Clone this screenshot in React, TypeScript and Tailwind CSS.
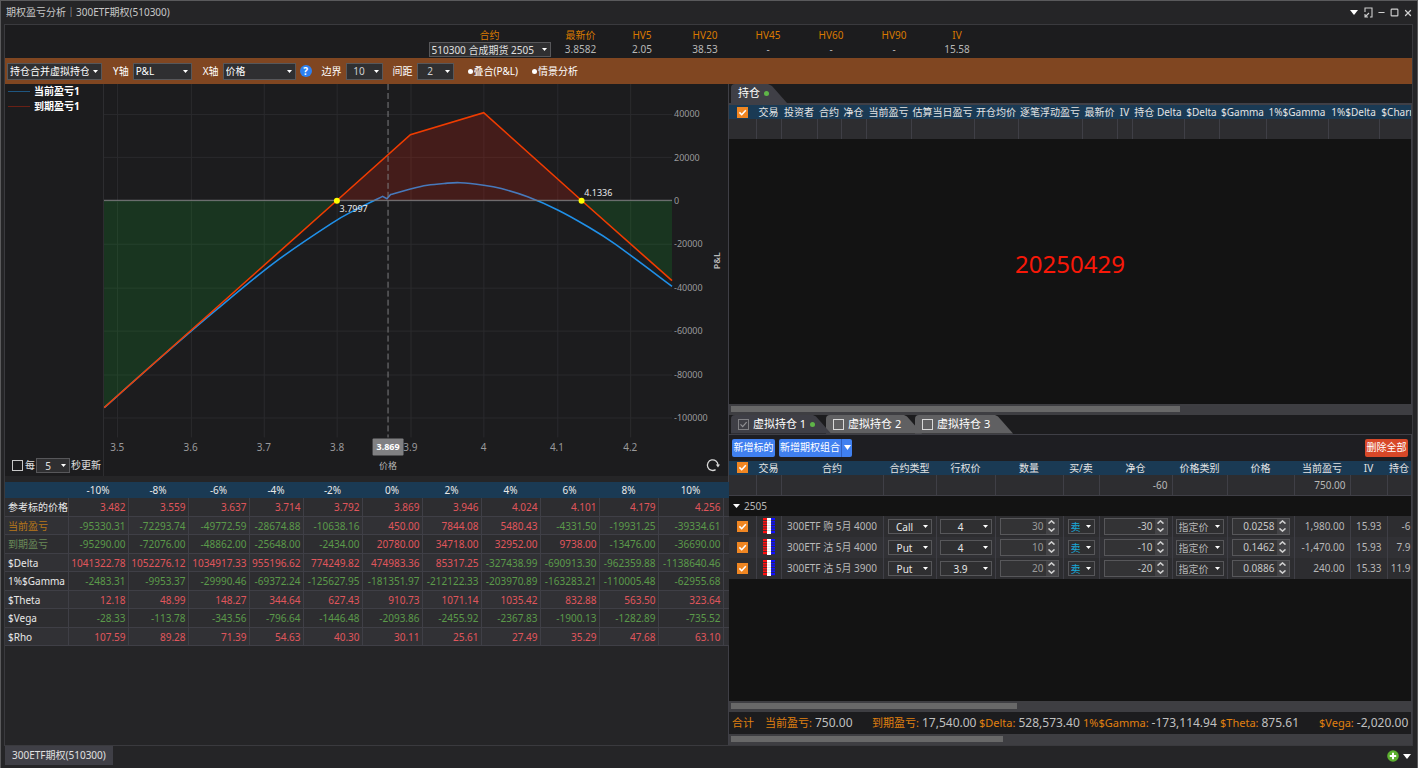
import type { ReactNode } from "react";
import { Minus, Square, X } from "lucide-react";

const stats = [
  { label: "最新价", value: "3.8582" },
  { label: "HV5", value: "2.05" },
  { label: "HV20", value: "38.53" },
  { label: "HV45", value: "-" },
  { label: "HV60", value: "-" },
  { label: "HV90", value: "-" },
  { label: "IV", value: "15.58" },
];

const scenarioHeads = ["-10%", "-8%", "-6%", "-4%", "-2%", "0%", "2%", "4%", "6%", "8%", "10%"];
const scenarioCols = [63, 60, 60, 61, 54, 59, 60, 59, 59, 59, 59, 65, 6];

const scenarioRows = [
  { name: "参考标的价格", color: "text-[#e8e8e8]", cells: ["3.482", "3.559", "3.637", "3.714", "3.792", "3.869", "3.946", "4.024", "4.101", "4.179", "4.256"] },
  { name: "当前盈亏", color: "text-[#b87818]", cells: ["-95330.31", "-72293.74", "-49772.59", "-28674.88", "-10638.16", "450.00", "7844.08", "5480.43", "-4331.50", "-19931.25", "-39334.61"] },
  { name: "到期盈亏", color: "text-[#6a8a58]", cells: ["-95290.00", "-72076.00", "-48862.00", "-25648.00", "-2434.00", "20780.00", "34718.00", "32952.00", "9738.00", "-13476.00", "-36690.00"] },
  { name: "$Delta", color: "text-[#e8e8e8]", cells: ["1041322.78", "1052276.12", "1034917.33", "955196.62", "774249.82", "474983.36", "85317.25", "-327438.99", "-690913.30", "-962359.88", "-1138640.46"] },
  { name: "1%$Gamma", color: "text-[#e8e8e8]", cells: ["-2483.31", "-9953.37", "-29990.46", "-69372.24", "-125627.95", "-181351.97", "-212122.33", "-203970.89", "-163283.21", "-110005.48", "-62955.68"] },
  { name: "$Theta", color: "text-[#e8e8e8]", cells: ["12.18", "48.99", "148.27", "344.64", "627.43", "910.73", "1071.14", "1035.42", "832.88", "563.50", "323.64"] },
  { name: "$Vega", color: "text-[#e8e8e8]", cells: ["-28.33", "-113.78", "-343.56", "-796.64", "-1446.48", "-2093.86", "-2455.92", "-2367.83", "-1900.13", "-1282.89", "-735.52"] },
  { name: "$Rho", color: "text-[#e8e8e8]", cells: ["107.59", "89.28", "71.39", "54.63", "40.30", "30.11", "25.61", "27.49", "35.29", "47.68", "63.10"] },
];

const positionCols = [
  { title: "交易", width: 25 },
  { title: "投资者", width: 36 },
  { title: "合约", width: 24 },
  { title: "净仓", width: 25 },
  { title: "当前盈亏", width: 45 },
  { title: "估算当日盈亏", width: 63 },
  { title: "开仓均价", width: 44 },
  { title: "逐笔浮动盈亏", width: 64 },
  { title: "最新价", width: 35 },
  { title: "IV", width: 15 },
  { title: "持仓 Delta", width: 52 },
  { title: "$Delta", width: 35 },
  { title: "$Gamma", width: 47 },
  { title: "1%$Gamma", width: 62 },
  { title: "1%$Delta", width: 51 },
  { title: "$Charm", width: 42 },
];

const virtualCols = [
  { title: "交易", width: 25, sum: "" },
  { title: "合约", width: 102, sum: "" },
  { title: "合约类型", width: 53, sum: "" },
  { title: "行权价", width: 59, sum: "" },
  { title: "数量", width: 68, sum: "" },
  { title: "买/卖", width: 36, sum: "" },
  { title: "净仓", width: 73, sum: "-60" },
  { title: "价格类别", width: 55, sum: "" },
  { title: "价格", width: 67, sum: "" },
  { title: "当前盈亏", width: 56, sum: "750.00" },
  { title: "IV", width: 37, sum: "" },
  { title: "持仓", width: 24, sum: "" },
];

const legs = [
  { name: "300ETF 购 5月 4000", type: "Call", strike: "4", qty: "30", net: "-30", price: "0.0258", pnl: "1,980.00", iv: "15.93", delta: "-6" },
  { name: "300ETF 沽 5月 4000", type: "Put", strike: "4", qty: "10", net: "-10", price: "0.1462", pnl: "-1,470.00", iv: "15.93", delta: "7.9" },
  { name: "300ETF 沽 5月 3900", type: "Put", strike: "3.9", qty: "20", net: "-20", price: "0.0886", pnl: "240.00", iv: "15.33", delta: "11.9" },
];

const totals = [
  { label: "当前盈亏:", value: "750.00", width: "w-[107px]" },
  { label: "到期盈亏:", value: "17,540.00", width: "w-[107px]" },
  { label: "$Delta:", value: "528,573.40", width: "w-[104px]" },
  { label: "1%$Gamma:", value: "-173,114.94", width: "w-[137px]" },
  { label: "$Theta:", value: "875.61", width: "w-[99px]" },
  { label: "$Vega:", value: "-2,020.00", width: "" },
];

/* ---------- chart data: [price, pnl] ---------- */

type Point = [number, number];

const px = (price: number) => 13.3 + (price - 3.5) * 734;
const py = (pnl: number) => 116.7 - pnl * 0.002177;

const expiry: Point[] = [
  [3.482, -95290], [3.7997, 0], [3.9, 30300], [4, 40400], [4.1336, 0], [4.257, -36900],
];
const currentLeft: Point[] = [
  [3.482, -95330], [3.559, -72294], [3.637, -49773], [3.714, -28675], [3.792, -10638], [3.825, -4300], [3.862, 1900],
];
const currentRight: Point[] = [
  [3.873, 2750], [3.9, 5300], [3.923, 7000], [3.946, 7844], [3.968, 8200], [4, 7050], [4.024, 5480], [4.06, 1700], [4.101, -4331], [4.14, -11600], [4.179, -19931], [4.257, -39500],
];

const line = (pts: Point[]) => pts.map(([x, y]) => `${px(x)},${py(y)}`).join(" L");

function smooth(pts: Point[]) {
  const p = pts.map(([x, y]) => [px(x), py(y)]);
  let d = `${p[0][0]},${p[0][1]}`;
  for (let i = 0; i < p.length - 1; i++) {
    const a = p[i - 1] ?? p[i];
    const b = p[i];
    const c = p[i + 1];
    const e = p[i + 2] ?? c;
    d += ` C${b[0] + (c[0] - a[0]) / 6},${b[1] + (c[1] - a[1]) / 6} ${c[0] - (e[0] - b[0]) / 6},${c[1] - (e[1] - b[1]) / 6} ${c[0]},${c[1]}`;
  }
  return d;
}

const xTicks = [3.5, 3.6, 3.7, 3.8, 3.9, 4, 4.1, 4.2];
const yTicks = [40000, 20000, 0, -20000, -40000, -60000, -80000, -100000];

/* ---------- small controls ---------- */

function Caret({ className = "w-[5px] h-[3px]" }: { className?: string }) {
  return (
    <svg viewBox="0 0 6 4" preserveAspectRatio="none" className={`fill-current ${className}`} aria-hidden="true">
      <path d="M0 0h6L3 4z" />
    </svg>
  );
}

function Chevron({ up = false }: { up?: boolean }) {
  return (
    <svg viewBox="0 0 7 4" className="w-[7px] h-1" fill="none" stroke="#d0d0d0" strokeWidth="1.5" aria-hidden="true">
      <path d={up ? "M.5 3.6 3.5.9l3 2.7" : "M.5.4l3 2.7 3-2.7"} />
    </svg>
  );
}

function Select({ label, value, className = "", center = false }: { label: string; value: string; className?: string; center?: boolean }) {
  return (
    <span className={`relative flex items-center shrink-0 ${className}`}>
      <select
        aria-label={label}
        defaultValue={value}
        className={`appearance-none w-full h-full border border-[#57575a] bg-[#2f2f31] outline-none pl-0.5 pr-3 ${center ? "[text-align-last:center]" : ""}`}
      >
        <option>{value}</option>
      </select>
      <Caret className="absolute right-1 w-[5px] h-[3px] text-white pointer-events-none" />
    </span>
  );
}

function Check({ label }: { label: string }) {
  return (
    <span className="relative inline-grid place-items-center align-middle w-[11px] h-[11px]">
      <input type="checkbox" aria-label={label} defaultChecked className="peer appearance-none w-[11px] h-[11px] bg-[#333337] checked:bg-[#f08622]" />
      <svg viewBox="0 0 11 11" className="absolute inset-0 pointer-events-none opacity-0 peer-checked:opacity-100" fill="none" stroke="#fff" strokeWidth="1.6">
        <path d="M2.4 5.4 4.7 7.7 8.8 3.2" />
      </svg>
    </span>
  );
}

function Spin({ label, value, muted = false }: { label: string; value: string; muted?: boolean }) {
  return (
    <span className="flex h-[17px] mx-1 border border-[#57575a] bg-[#333335]">
      <input
        type="text"
        aria-label={label}
        defaultValue={value}
        className={`min-w-0 flex-1 bg-transparent outline-none text-right pr-0.5 ${muted ? "text-[#9a9a9a]" : "text-[#c8c8c8]"}`}
      />
      <span className="w-3 flex flex-col bg-[#434346]">
        <button type="button" aria-label={`${label} +`} className="flex-1 grid place-items-center">
          <Chevron up />
        </button>
        <button type="button" aria-label={`${label} -`} className="flex-1 grid place-items-center">
          <Chevron />
        </button>
      </span>
    </span>
  );
}

function LadderIcon() {
  return (
    <svg viewBox="0 0 12 16" className="inline-block align-middle w-3 h-4" aria-hidden="true">
      <path fill="#ff1010" d="M0 0h4v16H0z" />
      <path fill="#fff" d="M4 0h4v16H4z" />
      <path fill="#1010ff" d="M8 0h4v16H8z" />
      <path stroke="#2d2d30" strokeWidth=".8" d="M0 2.5h4M0 5h4M0 7.5h4M0 10h4M0 12.5h4M8 2.5h4M8 5h4M8 7.5h4M8 10h4M8 12.5h4M0 15.5h4M8 15.5h4" />
      <path stroke="#c8c8c8" strokeWidth=".6" d="M4 2.5h4M4 5h4M4 7.5h4M4 10h4M4 12.5h4" />
    </svg>
  );
}

function Tab({ children, active = false, className = "" }: { children: ReactNode; active?: boolean; className?: string }) {
  return (
    <div
      className={`relative h-[19px] pl-[7px] flex items-center gap-1 text-[11px] text-white rounded-tl-sm [clip-path:polygon(0_0,calc(100%-19px)_0,calc(100%-15px)_2px,100%_100%,0_100%)] ${active ? "bg-[#3f3f46] z-20" : "bg-[#606062]"} ${className}`}
    >
      {children}
    </div>
  );
}

function ScrollTrack({ thumb }: { thumb: string }) {
  return (
    <div className="shrink-0 h-[11px] pl-0.5 pt-0.5 bg-[#3e3e42]">
      <div className={`h-[6px] bg-[#686868] ${thumb}`} />
    </div>
  );
}

/* ---------- panels ---------- */

function PnlChart() {
  return (
    <section className="relative flex shrink-0 bg-[#1c1c1e]">
      <div className="w-[99px] shrink-0 flex flex-col justify-between border-r border-[#2d2d30]">
        <ul className="pl-[3px] font-bold text-[10px] leading-[15px] text-white">
          <li className="flex items-center gap-1">
            <span className="w-[22px] h-px bg-[#1f5680]" />
            当前盈亏1
          </li>
          <li className="flex items-center gap-1">
            <span className="w-[22px] h-px bg-[#6a2015]" />
            到期盈亏1
          </li>
        </ul>
        <div className="flex items-center pl-[7px] pb-[3px] text-[10px] whitespace-nowrap text-[#e0e0e0]">
          <label className="flex items-center gap-0.5">
            <input type="checkbox" className="appearance-none w-[11px] h-[11px] border border-[#c8c8c8]" />
            每
          </label>
          <Select label="更新间隔" value="5" center className="mx-px w-[34px] h-[15px]" />
          秒更新
        </div>
      </div>

      <svg viewBox="0 0 625 393" className="flex-1 min-w-0" fontSize="9" fill="#9a9a9c" role="img" aria-label="P&L">
        <g stroke="#2a2a2d">
          {xTicks.map((t) => (
            <path key={t} d={`M${Math.round(px(t)) + 0.5} 0V354`} />
          ))}
          {yTicks.map((t) => (
            <path key={t} d={`M0 ${Math.round(py(t)) + 0.5}H569`} />
          ))}
        </g>
        <path d={`M${smooth(currentLeft)} L${px(3.868)},115 L${smooth(currentRight)}`} fill="none" stroke="#2090e8" strokeWidth="1.6" />
        <path d={`M0,${py(0)} L${line(expiry.slice(0, 2))}Z`} fill="#12902a" opacity=".22" />
        <path d={`M${line(expiry.slice(1, 5))}Z`} fill="#e41e0c" opacity=".2" />
        <path d={`M${line(expiry.slice(4))} V${py(0)}Z`} fill="#12902a" opacity=".22" />
        <path d="M0 116.5H569" stroke="#808082" />
        <path d="M284.5 0V354" stroke="#7c7c7e" strokeDasharray="6 3" />
        <path d={`M${line(expiry)}`} fill="none" stroke="#f03c00" strokeWidth="1.6" />
        <circle cx={px(3.7997)} cy="117" r="3" fill="#ff0" />
        <circle cx={px(4.1336)} cy="117" r="3" fill="#ff0" />
        <text x="236" y="128" fill="#e8e8e8">3.7997</text>
        <text x="481" y="112" fill="#e8e8e8">4.1336</text>

        {yTicks.map((t) => (
          <text key={t} x="571" y={py(t) + 3.5}>{t}</text>
        ))}
        {xTicks.map((t) => (
          <text key={t} x={px(t)} y="368" textAnchor="middle" fontSize="10">{t}</text>
        ))}
        <rect x="269" y="355" width="31" height="17" rx="1" fill="#808082" />
        <text x="284.5" y="367" textAnchor="middle" fill="#fff" fontWeight="bold">3.869</text>
        <text x="284.5" y="386" textAnchor="middle" fill="#b8b8b8">价格</text>
        <text transform="translate(617 177) rotate(-90)" textAnchor="middle" fill="#b8b8b8" fontWeight="600">P&L</text>
      </svg>

      <button type="button" aria-label="刷新" className="absolute right-2 bottom-1">
        <svg viewBox="0 0 14 14" className="w-[14px] h-[14px]" fill="none" stroke="#d8d8d8" strokeWidth="1.3">
          <path d="M9.6 11.6A5.3 5.3 0 1 1 12 7" />
          <path d="M9.8 6.6h4.2L12 9.4z" fill="#d8d8d8" stroke="none" />
        </svg>
      </button>
    </section>
  );
}

function ScenarioTable() {
  return (
    <table className="mt-[6px] w-full h-[164px] table-fixed border-collapse text-[10px] leading-[14px]">
      <colgroup>
        {scenarioCols.map((w, i) => (
          <col key={i} style={{ width: w }} />
        ))}
      </colgroup>
      <thead>
        <tr className="h-4 bg-[#1a3a54] text-[#e8e8e8]">
          <th />
          {scenarioHeads.map((h) => (
            <th key={h} className="font-normal">{h}</th>
          ))}
          <th />
        </tr>
      </thead>
      <tbody>
        {scenarioRows.map((row) => (
          <tr key={row.name} className="bg-[#2d2d30] even:bg-[#313135] border-b border-[#3f3f46]">
            <th className={`border-r border-[#3f3f46] pl-[3px] text-left font-normal whitespace-nowrap ${row.color}`}>{row.name}</th>
            {row.cells.map((c, i) => (
              <td key={i} className={`border-r border-[#3f3f46] pr-0.5 text-right ${c.startsWith("-") ? "text-[#5b9a4a]" : "text-[#e0565c]"}`}>
                <span className="flex justify-end whitespace-nowrap">{c}</span>
              </td>
            ))}
            <td />
          </tr>
        ))}
      </tbody>
    </table>
  );
}

function PositionPanel() {
  return (
    <section className="flex-1 min-h-0 flex flex-col">
      <div className="flex pl-0.5">
        <Tab active className="w-[56px]">
          持仓
          <span className="w-[5px] h-[5px] rounded-full bg-[#5fb548]" />
        </Tab>
      </div>
      <div className="flex-1 min-h-0 flex flex-col border-t-2 border-r border-[#3f3f46] bg-[#131313]">
        <div className="overflow-hidden">
          <table className="w-[692px] table-fixed border-collapse text-[10px] leading-[14px]">
            <colgroup>
              <col className="w-[27px]" />
              {positionCols.map((c) => (
                <col key={c.title} style={{ width: c.width }} />
              ))}
            </colgroup>
            <thead>
              <tr className="h-[14px] bg-[#1a3a54] text-[#e4e4e4]">
                <th className="leading-none"><Check label="全选持仓" /></th>
                {positionCols.map((c) => (
                  <th key={c.title} className="font-normal whitespace-nowrap">{c.title}</th>
                ))}
              </tr>
            </thead>
            <tbody>
              <tr className="h-5 bg-[#2d2d30]">
                <td className="border-r border-[#3f3f46]" />
                {positionCols.map((c) => (
                  <td key={c.title} className="border-r border-[#3f3f46]" />
                ))}
              </tr>
            </tbody>
          </table>
        </div>
        <p className="flex-1 grid place-items-center pb-3.5 text-2xl text-[#f81808]">20250429</p>
        <ScrollTrack thumb="w-[66%]" />
      </div>
    </section>
  );
}

function VirtualPanel() {
  return (
    <section className="flex-1 min-h-0 flex flex-col">
      <div className="flex pl-0.5">
        <Tab active className="w-[100px]">
          <label className="flex items-center gap-1">
            <span className="relative w-[11px] h-[11px]">
              <input type="checkbox" defaultChecked disabled className="absolute inset-0 appearance-none border border-[#808084]" />
              <svg viewBox="0 0 11 11" className="absolute inset-0" fill="none" stroke="#909094" strokeWidth="1.2">
                <path d="M2.5 5.4 4.7 7.7 8.6 3.2" />
              </svg>
            </span>
            虚拟持仓 1
          </label>
          <span className="w-[5px] h-[5px] rounded-full bg-[#5fb548]" />
        </Tab>
        {[2, 3].map((n) => (
          <Tab key={n} className={n === 2 ? "w-[96px] -ml-[5px] z-10" : "w-[98px] -ml-[7px]"}>
            <label className="flex items-center gap-1">
              <input type="checkbox" className="appearance-none w-[11px] h-[11px] border border-[#d8d8d8]" />
              虚拟持仓 {n}
            </label>
          </Tab>
        ))}
      </div>
      <div className="flex-1 min-h-0 flex flex-col border-t border-r border-[#3f3f46] bg-[#131313]">
        <div className="h-[26px] shrink-0 flex items-center gap-1 px-[3px] bg-[#1e1e22] text-[10px] text-white whitespace-nowrap">
          <button type="button" className="h-[18px] w-[43px] rounded-xs bg-[#4080f0]">新增标的</button>
          <div className="flex">
            <button type="button" className="h-[18px] w-[62px] rounded-l-xs bg-[#4080f0]">新增期权组合</button>
            <button type="button" aria-label="更多组合" className="h-[18px] w-[11px] grid place-items-center rounded-r-xs border-l border-[#3060c0] bg-[#4080f0]">
              <Caret className="w-[7px] h-[5px]" />
            </button>
          </div>
          <button type="button" className="ml-auto h-[18px] w-[43px] rounded-xs bg-[#d84828]">删除全部</button>
        </div>
        <div className="overflow-hidden">
          <table className="w-[682px] table-fixed border-collapse text-[10px] leading-[14px] text-[#b8b8b8]">
            <colgroup>
              <col className="w-[27px]" />
              {virtualCols.map((c) => (
                <col key={c.title} style={{ width: c.width }} />
              ))}
            </colgroup>
            <thead>
              <tr className="h-[14px] bg-[#1a3a54] text-[#e4e4e4]">
                <th className="leading-none"><Check label="全选虚拟持仓" /></th>
                {virtualCols.map((c) => (
                  <th key={c.title} className="font-normal whitespace-nowrap">{c.title}</th>
                ))}
              </tr>
            </thead>
            <tbody>
              <tr className="h-[21px] bg-[#2d2d30] border-b border-[#3f3f46]">
                <td className="border-r border-[#3f3f46]" />
                {virtualCols.map((c) => (
                  <td key={c.title} className="border-r border-[#3f3f46] pr-1 text-right">{c.sum}</td>
                ))}
              </tr>
              <tr className="h-[20px] bg-[#131313]">
                <td colSpan={13}>
                  <button type="button" className="flex items-center gap-1 pl-1">
                    <Caret className="w-[7px] h-1 text-white" />
                    2505
                  </button>
                </td>
              </tr>
              {legs.map((leg) => (
                <tr key={leg.name} className="h-[21px] bg-[#2d2d30] even:bg-[#313135] [&>td]:border-r [&>td]:border-[#3f3f46] [&>td]:whitespace-nowrap">
                  <td className="text-center leading-none"><Check label={leg.name} /></td>
                  <td className="text-center leading-none"><LadderIcon /></td>
                  <td className="text-center">{leg.name}</td>
                  <td className="text-[#e8e8e8]">
                    <Select label="合约类型" value={leg.type} center className="mx-1 h-[15px]" />
                  </td>
                  <td className="text-[#e8e8e8]">
                    <Select label="行权价" value={leg.strike} center className="mx-[3px] h-[15px]" />
                  </td>
                  <td><Spin label="数量" value={leg.qty} muted /></td>
                  <td className="text-[#18a8d8]">
                    <Select label="买/卖" value="卖" className="mx-1 h-[15px]" />
                  </td>
                  <td><Spin label="净仓" value={leg.net} /></td>
                  <td><Select label="价格类别" value="指定价" className="mx-[3px] h-[15px]" /></td>
                  <td><Spin label="价格" value={leg.price} /></td>
                  <td className="pr-[5px] text-right">{leg.pnl}</td>
                  <td className="pr-[5px] text-right">{leg.iv}</td>
                  <td className="text-right">{leg.delta}</td>
                </tr>
              ))}
            </tbody>
          </table>
        </div>
        <div className="flex-1" />
        <ScrollTrack thumb="w-[42%]" />
        <div className="h-[22px] shrink-0 flex items-center pl-[3px] bg-[#1c1c1e] text-[11px] whitespace-nowrap overflow-hidden text-[#e08010]">
          <span className="w-[33px] shrink-0">合计</span>
          {totals.map((t) => (
            <span key={t.label} className={`shrink-0 flex items-center gap-[3px] ${t.width}`}>
              {t.label}
              <span className="text-xs text-[#c0c0c0]">{t.value}</span>
            </span>
          ))}
        </div>
        <ScrollTrack thumb="w-[40%]" />
      </div>
    </section>
  );
}

export default function App() {
  return (
    <div className="h-screen min-h-[700px] flex flex-col pl-[3px] pr-1 border-t border-x border-[#5a5a5c] bg-[#252527] font-['Noto_Sans','Noto_Sans_CJK_SC',sans-serif] text-[10px] text-[#c8c8c8]">
      {/* Title bar */}
      <header className="h-[23px] shrink-0 flex items-center justify-between pl-0.5">
        <h1>期权盈亏分析｜300ETF期权(510300)</h1>
        <div className="flex items-center gap-1 text-[#d0d0d0]">
          <button type="button" aria-label="菜单"><Caret className="w-2 h-[5px] text-white" /></button>
          <button type="button" aria-label="弹出" className="ml-0.5">
            <svg viewBox="0 0 9 11" className="w-[9px] h-[11px]" fill="none" stroke="currentColor" strokeWidth="1.1">
              <path d="M1 5V1h7v9H6M5 6 1 10M1 7v3h3" />
            </svg>
          </button>
          <button type="button" aria-label="最小化"><Minus size={9} strokeWidth={3} /></button>
          <button type="button" aria-label="最大化"><Square size={9} strokeWidth={3} /></button>
          <button type="button" aria-label="关闭"><X size={10} strokeWidth={3} /></button>
        </div>
      </header>

      <main className="flex-1 min-h-0 flex flex-col border-t border-x border-[#3a3a3e]">
        {/* Underlying quote */}
        <section className="h-[33px] shrink-0 flex justify-center pt-[3px] bg-[#1c1c1e] text-center leading-[14px]">
          <div className="w-[122px]">
            <div className="text-[#d97a00]">合约</div>
            <Select label="合约" value="510300 合成期货 2505" className="h-[15px] text-[#e0e0e0]" />
          </div>
          {stats.map((s) => (
            <dl key={s.label} className={s.label === "最新价" ? "w-[60px]" : "w-[63px]"}>
              <dt className="text-[#d97a00]">{s.label}</dt>
              <dd className="text-[#b8b8b8]">{s.value}</dd>
            </dl>
          ))}
        </section>

        {/* Toolbar */}
        <section className="h-[26px] shrink-0 flex items-center pl-0.5 bg-[#804621] text-white whitespace-nowrap">
          <Select label="持仓范围" value="持仓合并虚拟持仓" className="w-[95px] h-[17px]" />
          <span className="ml-[11px] mr-1">Y轴</span>
          <Select label="Y轴" value="P&L" className="w-[59px] h-[17px]" />
          <span className="ml-[11px] mr-1">X轴</span>
          <Select label="X轴" value="价格" className="w-[73px] h-[17px]" />
          <button type="button" aria-label="帮助" className="ml-1 w-3 h-3 rounded-full bg-[#2d80f0] font-bold leading-3">?</button>
          <span className="ml-[10px] mr-1">边界</span>
          <Select label="边界" value="10" center className="w-[37px] h-[17px] text-[#d0d0d0]" />
          <span className="ml-[10px] mr-1">间距</span>
          <Select label="间距" value="2" center className="w-[37px] h-[17px] text-[#d0d0d0]" />
          <button type="button" className="ml-[14px] flex items-center gap-px">
            <span className="w-[5px] h-[5px] rounded-full bg-white" />
            叠合(P&L)
          </button>
          <button type="button" className="ml-[14px] flex items-center gap-px">
            <span className="w-[5px] h-[5px] rounded-full bg-white" />
            情景分析
          </button>
        </section>

        <div className="flex-1 min-h-0 grid grid-cols-[724fr_683fr]">
          <div className="min-w-0 flex flex-col border-r border-[#3f3f46] bg-[#252527]">
            <PnlChart />
            <ScenarioTable />
          </div>
          <div className="min-w-0 flex flex-col bg-[#1c1c1e]">
            <PositionPanel />
            <VirtualPanel />
          </div>
        </div>
      </main>

      <footer className="h-[23px] shrink-0 flex items-start justify-between border-t border-[#3a3a3e]">
        <button type="button" className="ml-px h-[19px] px-[7px] bg-[#3f3f46] text-[#e0e0e0]">300ETF期权(510300)</button>
        <div className="flex items-center gap-1 pt-1 pr-0.5">
          <button type="button" aria-label="新增页面">
            <svg viewBox="0 0 12 12" className="w-3 h-3">
              <circle cx="6" cy="6" r="5.8" fill="#5cb030" />
              <path d="M6 2.8v6.4M2.8 6h6.4" stroke="#fff" strokeWidth="2" />
            </svg>
          </button>
          <button type="button" aria-label="页面列表"><Caret className="w-2 h-[5px] text-white" /></button>
        </div>
      </footer>
    </div>
  );
}
